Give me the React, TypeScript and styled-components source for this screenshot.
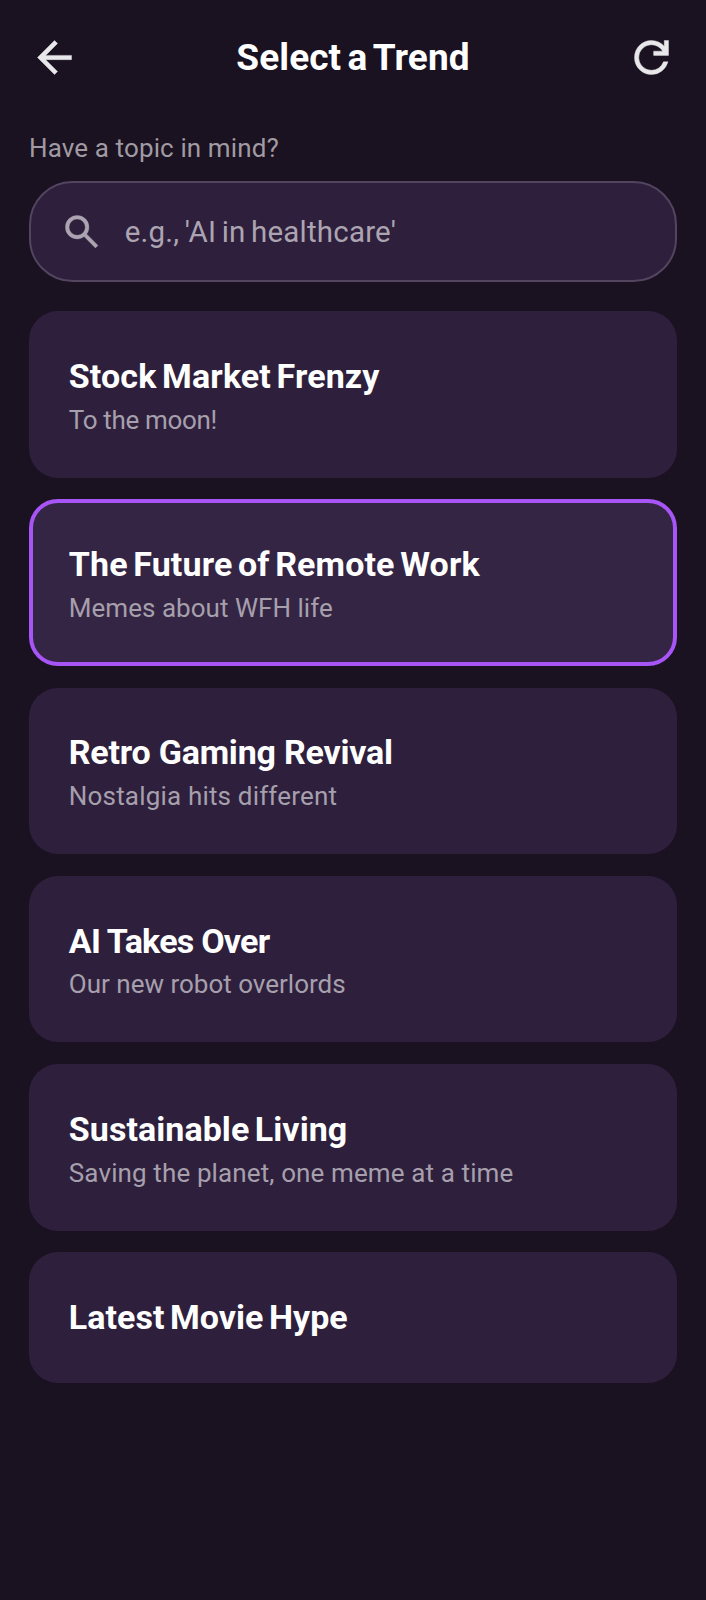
import React, { useState } from 'react';
import styled, { createGlobalStyle } from 'styled-components';

const GlobalStyle = createGlobalStyle`
  *, *::before, *::after { box-sizing: border-box; }
  body {
    margin: 0;
    background: #1a1121;
    font-family: Roboto, 'Liberation Sans', sans-serif;
    color: #fff;
  }
  h1, h2, p { margin: 0; }
`;

const Screen = styled.main`
  min-height: 1600px;
  padding: 32.4px 29px 0;
  background: #1a1121;
`;

const Header = styled.header`
  display: flex;
  align-items: center;
  justify-content: space-between;
  height: 51px;
`;

const IconButton = styled.button`
  display: flex;
  padding: 0;
  border: 0;
  background: none;
  color: #e8e7e9;
`;

const Icon = styled.svg<{ $size: number }>`
  display: block;
  flex: none;
  width: ${({ $size }) => $size}px;
  height: ${({ $size }) => $size}px;
  fill: currentColor;
`;

const Title = styled.h1`
  font-size: 37px;
  font-weight: 700;
  line-height: 51px;
  letter-spacing: 0.1px;
  word-spacing: -3px;
`;

const SearchLabel = styled.label`
  display: block;
  margin-top: 46.8px;
  font-size: 26px;
  line-height: 36.2px;
  letter-spacing: 0.12px;
  color: #a09ba2;
`;

const SearchField = styled.div`
  display: flex;
  align-items: center;
  gap: 21.8px;
  height: 101.2px;
  margin-top: 14.8px;
  padding: 0 28.6px;
  border: 2px solid #53445f;
  border-radius: 43.5px;
  background: #2e1f3d;
  color: #aca5b1;
`;

const SearchInput = styled.input`
  flex: 1;
  min-width: 0;
  height: 44px;
  padding: 0;
  border: 0;
  outline: 0;
  background: none;
  font: 400 29.5px Roboto, 'Liberation Sans', sans-serif;
  letter-spacing: 0.2px;
  word-spacing: -2px;
  color: #fff;

  &::placeholder {
    color: #aca5b1;
    opacity: 1;
  }
`;

const TrendList = styled.section`
  display: flex;
  flex-direction: column;
  gap: 21.7px;
  margin-top: 28.9px;
`;

const TrendCard = styled.article<{ $selected: boolean }>`
  padding: 35.8px 35.8px;
  border: 4px solid ${({ $selected }) => ($selected ? '#a855f7' : 'transparent')};
  border-radius: 29px;
  background: ${({ $selected }) => ($selected ? '#352544' : '#2e1f3d')} border-box;
`;

const TrendName = styled.h2<{ $tracking: number; $wordGap: number }>`
  font-size: 34px;
  font-weight: 700;
  line-height: 50.7px;
  letter-spacing: ${({ $tracking }) => $tracking}px;
  word-spacing: ${({ $wordGap }) => $wordGap}px;
`;

const TrendNote = styled.p<{ $tracking: number }>`
  font-size: 26px;
  line-height: 36.2px;
  letter-spacing: ${({ $tracking }) => $tracking}px;
  color: #a69fac;
`;

type Trend = {
  name: string;
  nameTracking: number;
  nameWordGap: number;
  note?: string;
  noteTracking?: number;
};

const trends: Trend[] = [
  { name: 'Stock Market Frenzy', nameTracking: 0.13, nameWordGap: -3, note: 'To the moon!', noteTracking: -0.33 },
  { name: 'The Future of Remote Work', nameTracking: 0.13, nameWordGap: -3, note: 'Memes about WFH life', noteTracking: 0.03 },
  { name: 'Retro Gaming Revival', nameTracking: -0.22, nameWordGap: 0, note: 'Nostalgia hits different', noteTracking: 0.18 },
  { name: 'AI Takes Over', nameTracking: -0.76, nameWordGap: 0, note: 'Our new robot overlords', noteTracking: 0 },
  { name: 'Sustainable Living', nameTracking: 0.06, nameWordGap: -3, note: 'Saving the planet, one meme at a time', noteTracking: 0.12 },
  { name: 'Latest Movie Hype', nameTracking: 0.04, nameWordGap: -3 },
];

const icons = {
  back: 'm313-440 224 224-57 56-320-320 320-320 57 56-224 224h487v80H313Z',
  refresh:
    'M480-160q-134 0-227-93t-93-227q0-134 93-227t227-93q69 0 132 28.5T720-690v-110h80v280H520v-80h168q-32-56-87.5-88T480-720q-100 0-170 70t-70 170q0 100 70 170t170 70q77 0 139-44t87-116h84q-28 106-114 173t-196 67Z',
  search:
    'M784-120 532-372q-30 24-69 38t-83 14q-109 0-184.5-75.5T120-580q0-109 75.5-184.5T380-840q109 0 184.5 75.5T640-580q0 44-14 83t-38 69l252 252-56 56ZM380-400q75 0 127.5-52.5T560-580q0-75-52.5-127.5T380-760q-75 0-127.5 52.5T200-580q0 75 52.5 127.5T380-400Z',
};

function Glyph({ name, size }: { name: keyof typeof icons; size: number }) {
  return (
    <Icon $size={size} viewBox="0 -960 960 960" aria-hidden="true">
      <path d={icons[name]} stroke="currentColor" strokeWidth={8} />
    </Icon>
  );
}

export default function App() {
  const [selected, setSelected] = useState(1);
  const [topic, setTopic] = useState('');

  return (
    <>
      <GlobalStyle />
      <Screen>
        <Header>
          <IconButton type="button">
            <Glyph name="back" size={51} />
          </IconButton>
          <Title>Select a Trend</Title>
          <IconButton type="button">
            <Glyph name="refresh" size={51} />
          </IconButton>
        </Header>
        <SearchLabel htmlFor="topic">Have a topic in mind?</SearchLabel>
        <SearchField>
          <Glyph name="search" size={43.4} />
          <SearchInput
            id="topic"
            value={topic}
            onChange={(event) => setTopic(event.target.value)}
            placeholder="e.g., 'AI in healthcare'"
          />
        </SearchField>
        <TrendList>
          {trends.map((trend, index) => (
            <TrendCard key={trend.name} $selected={index === selected} onClick={() => setSelected(index)}>
              <TrendName $tracking={trend.nameTracking} $wordGap={trend.nameWordGap}>
                {trend.name}
              </TrendName>
              {trend.note && <TrendNote $tracking={trend.noteTracking ?? 0}>{trend.note}</TrendNote>}
            </TrendCard>
          ))}
        </TrendList>
      </Screen>
    </>
  );
}
